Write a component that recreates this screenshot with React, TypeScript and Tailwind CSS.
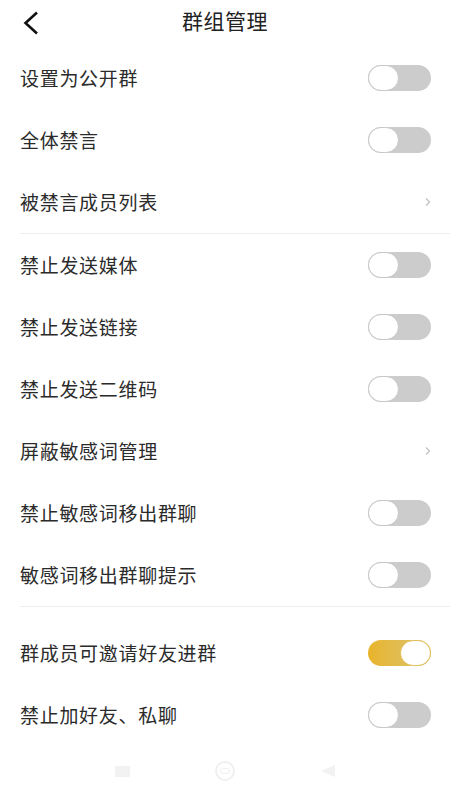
import React from "react";

type Row = { label: string; kind: "toggle" | "link"; on?: boolean };

const group1: Row[] = [
  { label: "设置为公开群", kind: "toggle" },
  { label: "全体禁言", kind: "toggle" },
  { label: "被禁言成员列表", kind: "link" },
];
const group2: Row[] = [
  { label: "禁止发送媒体", kind: "toggle" },
  { label: "禁止发送链接", kind: "toggle" },
  { label: "禁止发送二维码", kind: "toggle" },
  { label: "屏蔽敏感词管理", kind: "link" },
  { label: "禁止敏感词移出群聊", kind: "toggle" },
  { label: "敏感词移出群聊提示", kind: "toggle" },
];
const group3: Row[] = [
  { label: "群成员可邀请好友进群", kind: "toggle", on: true },
  { label: "禁止加好友、私聊", kind: "toggle" },
];

function Toggle({ on }: { on?: boolean }) {
  if (on) {
    return (
      <div className="w-[63px] h-[26px] rounded-full bg-gradient-to-r from-[#e9b429] to-[#d8c46c] flex items-center justify-end">
        <div className="w-[31px] h-[26px] rounded-full bg-white border border-[#e2c05a]" />
      </div>
    );
  }
  return (
    <div className="w-[63px] h-[26px] rounded-full bg-[#cccccc] flex items-center">
      <div className="w-[31px] h-[26px] rounded-full bg-white border border-[#c8c8c8]" />
    </div>
  );
}

function Item({ row }: { row: Row }) {
  return (
    <div className="h-[62px] flex items-center justify-between pl-[20px] pr-[19px]">
      <span className="text-[19px] text-[#2b2b2b] tracking-[0.7px]">{row.label}</span>
      {row.kind === "toggle" ? (
        <Toggle on={row.on} />
      ) : (
        <svg width="8" height="10" viewBox="0 0 8 10" className="-mr-[1px]">
          <path d="M2 1.5 L5.5 5 L2 8.5" fill="none" stroke="#c4c4c4" strokeWidth="1.3" />
        </svg>
      )}
    </div>
  );
}

export default function App() {
  return (
    <div
      className="w-[450px] h-[800px] bg-white flex flex-col overflow-hidden"
      style={{ fontFamily: '"Noto Sans CJK SC", "Noto Sans", sans-serif' }}
    >
      <div className="h-[47px] relative flex items-start justify-center">
        <svg width="20" height="26" viewBox="0 0 20 26" className="absolute left-[21px] top-[10px]">
          <path d="M16 2.5 L4.5 13 L16 23.5" fill="none" stroke="#111111" strokeWidth="2.6" />
        </svg>
        <span className="text-[21px] text-[#222222] leading-none mt-[10px] tracking-[0.5px]">群组管理</span>
      </div>
      {group1.map((r) => (
        <Item key={r.label} row={r} />
      ))}
      <div className="ml-[20px] h-px bg-[#eeeeee]" />
      {group2.map((r) => (
        <Item key={r.label} row={r} />
      ))}
      <div className="ml-[20px] h-px bg-[#eeeeee]" />
      <div className="h-[15px]" />
      {group3.map((r) => (
        <Item key={r.label} row={r} />
      ))}
      <div className="flex-1 flex items-center justify-center gap-[85px] pb-[4px]">
        <div className="w-[15px] h-[11px] bg-[#f2f2f2]" />
        <div className="w-[20px] h-[20px] rounded-full border-2 border-[#f0f0f0] flex items-center justify-center">
          <div className="w-[10px] h-[6px] rounded-full border border-[#f0f0f0]" />
        </div>
        <svg width="16" height="14" viewBox="0 0 16 14">
          <path d="M15 1 L1 7 L15 13 Z" fill="#f2f2f2" />
        </svg>
      </div>
    </div>
  );
}
